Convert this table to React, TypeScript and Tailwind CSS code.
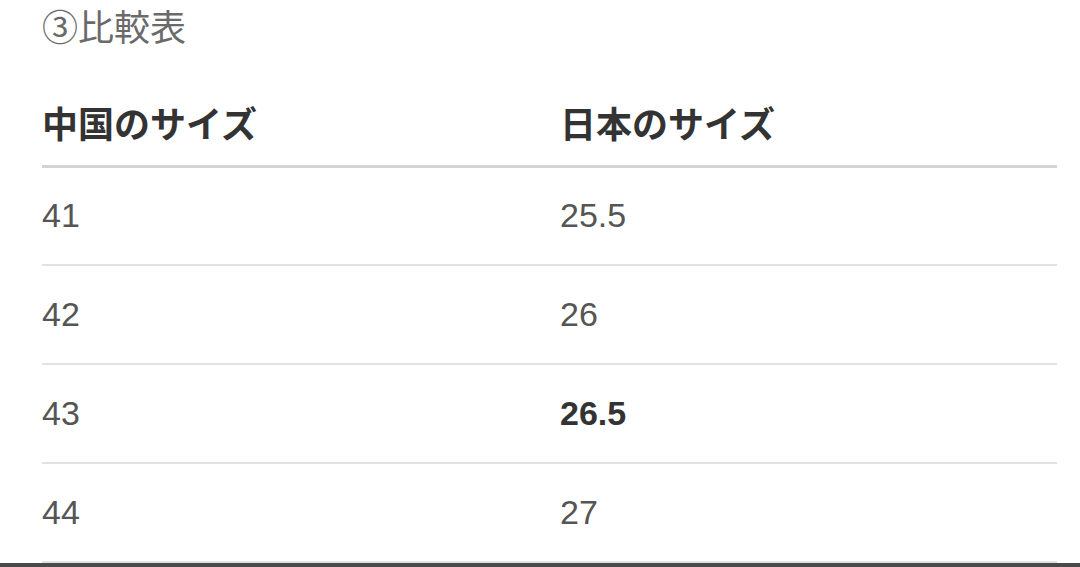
const rows: { cn: string; jp: string; strong?: boolean }[] = [
  { cn: '41', jp: '25.5' },
  { cn: '42', jp: '26' },
  { cn: '43', jp: '26.5', strong: true },
  { cn: '44', jp: '27' },
];

export default function App() {
  return (
    <div
      className="w-[1080px] h-[567px] bg-white flex flex-col overflow-hidden"
      style={{ fontFamily: '"Liberation Sans", "Noto Sans CJK JP", sans-serif' }}
    >
      <div className="flex-1 pl-[42px] pr-[23px]">
        <h2 className="h-[58px] flex items-center text-[36px] font-normal text-[#6a6a6a]">③比較表</h2>
        <table className="w-full border-collapse">
          <thead>
            <tr className="border-b-[3px] border-[#d4d4d4]">
              <th className="w-[518px] h-[108px] pt-[30px] text-left align-middle text-[36px] font-semibold text-[#333]">
                中国のサイズ
              </th>
              <th className="h-[108px] pt-[30px] text-left align-middle text-[36px] font-semibold text-[#333]">
                日本のサイズ
              </th>
            </tr>
          </thead>
          <tbody>
            {rows.map((r) => (
              <tr key={r.cn} className="border-b-2 border-[#e2e2e2]">
                <td className="h-[99px] align-middle text-[34px] text-[#555]">{r.cn}</td>
                <td className={`h-[99px] align-middle text-[34px] ${r.strong ? 'font-bold text-[#333]' : 'text-[#555]'}`}>
                  {r.jp}
                </td>
              </tr>
            ))}
          </tbody>
        </table>
      </div>
      <div className="h-[4px] bg-[#4a4a4a]" />
    </div>
  );
}
